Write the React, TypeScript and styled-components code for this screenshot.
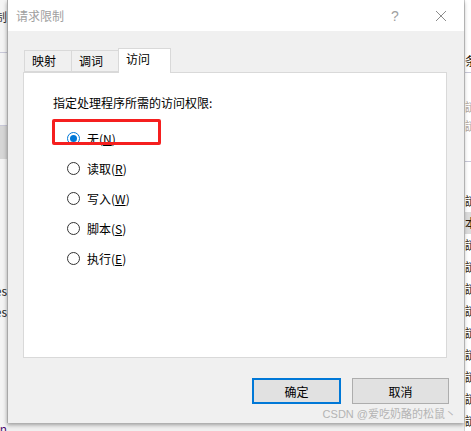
import React, { useState } from "react";
import styled, { createGlobalStyle } from "styled-components";

const GlobalStyle = createGlobalStyle`
    html, body {
        margin: 0;
        padding: 0;
        background: #f0f0f0;
    }
    body {
        font-family: "Noto Sans CJK SC", "Noto Sans", sans-serif;
        font-size: 12px;
        color: #000;
    }
`;

const Screen = styled.div`
    display: flex;
    width: 471px;
    height: 431px;
    overflow: hidden;
    background: #f0f0f0;
`;

const LeftStrip = styled.div`
    width: 7px;
    flex: none;
    display: flex;
    flex-direction: column;
    background: #f4f4f4;
    overflow: hidden;
    font-size: 12px;
`;

const StripPiece = styled.div<{ $h: number; $bg?: string; $line?: boolean; $color?: string }>`
    height: ${(p) => p.$h}px;
    flex: none;
    background: ${(p) => p.$bg || "transparent"};
    border-bottom: ${(p) => (p.$line ? "1px solid #c8c8d8" : "none")};
    color: ${(p) => p.$color || "#000"};
    line-height: ${(p) => p.$h}px;
    white-space: nowrap;
    display: flex;
    justify-content: flex-end;
`;

const RightStrip = styled.div`
    width: 7px;
    flex: none;
    display: flex;
    flex-direction: column;
    background: #fff;
    overflow: hidden;
    border-left: 1px solid #d0d0d0;
`;

const RightPiece = styled.div<{ $h: number; $color?: string; $bg?: string; $line?: boolean }>`
    height: ${(p) => p.$h}px;
    flex: none;
    color: ${(p) => p.$color || "#2a1a0a"};
    background: ${(p) => p.$bg || "transparent"};
    border-bottom: ${(p) => (p.$line ? "1px solid #c8c8d8" : "none")};
    line-height: ${(p) => p.$h}px;
    font-size: 12px;
    white-space: nowrap;
`;

const Dialog = styled.div`
    position: relative;
    width: 456px;
    height: 423px;
    flex: none;
    display: flex;
    flex-direction: column;
    border-left: 1px solid #a8a8a8;
    box-shadow: 0 2px 4px rgba(0, 0, 0, 0.35);
    background: #f0f0f0;
    z-index: 1;
`;

const TitleBar = styled.div`
    height: 31px;
    flex: none;
    display: flex;
    align-items: center;
    background: #fff;
    padding-left: 8px;
`;

const Title = styled.div`
    flex: 1;
    color: #a0a0a0;
    font-size: 12px;
`;

const TitleButton = styled.div`
    width: 46px;
    height: 31px;
    display: flex;
    align-items: center;
    justify-content: center;
    color: #a0a0a0;
    font-family: "Liberation Sans", sans-serif;
    font-size: 14px;
`;

const Body = styled.div`
    flex: 1;
    display: flex;
    flex-direction: column;
    padding: 17px 17px 0 15px;
`;

const TabRow = styled.div`
    display: flex;
    align-items: flex-end;
    height: 24px;
    padding-left: 2px;
    position: relative;
    z-index: 2;
`;

const Tab = styled.div<{ $active?: boolean; $w: number }>`
    width: ${(p) => p.$w}px;
    height: ${(p) => (p.$active ? 25 : 22)}px;
    margin-bottom: ${(p) => (p.$active ? -1 : 0)}px;
    margin-left: -1px;
    box-sizing: border-box;
    border: 1px solid #d9d9d9;
    border-bottom: ${(p) => (p.$active ? "none" : "1px solid #d9d9d9")};
    background: ${(p) => (p.$active ? "#fff" : "#f0f0f0")};
    padding: 2px 0 0 7px;
    font-size: 12px;
    line-height: 16px;
    color: #000;
`;

const Panel = styled.div`
    position: relative;
    height: 286px;
    box-sizing: border-box;
    background: #fff;
    border: 1px solid #d9d9d9;
    padding: 22px 0 0 29px;
    display: flex;
    flex-direction: column;
`;

const Prompt = styled.div`
    font-size: 12px;
    line-height: 16px;
    margin-bottom: 19px;
`;

const OptionList = styled.div`
    display: flex;
    flex-direction: column;
    gap: 14px;
    padding-left: 14px;
`;

const Option = styled.label`
    display: flex;
    align-items: center;
    gap: 7px;
    height: 16px;
    font-size: 12px;
    cursor: default;
`;

const RadioCircle = styled.span<{ $checked: boolean }>`
    width: 13px;
    height: 13px;
    box-sizing: border-box;
    border-radius: 50%;
    border: 1px solid ${(p) => (p.$checked ? "#0078d7" : "#333")};
    background: #fff;
    display: flex;
    align-items: center;
    justify-content: center;
    &::after {
        content: "";
        width: 7px;
        height: 7px;
        border-radius: 50%;
        background: ${(p) => (p.$checked ? "#0078d7" : "transparent")};
    }
`;

const Key = styled.span`
    text-decoration: underline;
    text-underline-offset: 1px;
`;

const Highlight = styled.div`
    position: absolute;
    left: 28px;
    top: 46px;
    width: 109px;
    height: 26px;
    box-sizing: border-box;
    border: 3px solid #f51f1f;
    border-radius: 2px;
    pointer-events: none;
`;

const ButtonRow = styled.div`
    display: flex;
    justify-content: flex-end;
    gap: 11px;
    margin-top: 20px;
    margin-right: -2px;
`;

const Button = styled.button<{ $primary?: boolean; $w: number }>`
    width: ${(p) => p.$w}px;
    height: 26px;
    box-sizing: border-box;
    background: #e1e1e1;
    border: ${(p) => (p.$primary ? "2px solid #0078d7" : "1px solid #adadad")};
    font-family: "Noto Sans CJK SC", sans-serif;
    font-size: 12px;
    color: #000;
    padding: 0;
`;

const Watermark = styled.div`
    position: absolute;
    right: 8px;
    bottom: 2px;
    font-family: "Liberation Sans", "Noto Sans CJK SC", sans-serif;
    font-size: 11px;
    color: #b4b4b4;
    white-space: nowrap;
`;

const options = [
    { label: "无", key: "N" },
    { label: "读取", key: "R" },
    { label: "写入", key: "W" },
    { label: "脚本", key: "S" },
    { label: "执行", key: "E" },
];

const rightRows = [
    { h: 50 },
    { h: 22, text: "条", line: true },
    { h: 25 },
    { h: 18, text: "謎", color: "#b0a8a0" },
    { h: 20, text: "謎", color: "#b0a8a0" },
    { h: 25, line: true },
    { h: 28 },
    { h: 22, text: "謎" },
    { h: 22, text: "本", bg: "#dcdcdc" },
    ...Array.from({ length: 10 }, () => ({ h: 22, text: "謎" })),
];

const App = () => {
    const [selected, setSelected] = useState("N");

    return (
        <Screen>
            <GlobalStyle />
            <LeftStrip>
                <StripPiece $h={10} />
                <StripPiece $h={14} $color="#333">
                    制
                </StripPiece>
                <StripPiece $h={28} $line />
                <StripPiece $h={72} $line />
                <StripPiece $h={33} $bg="#d6d6d6" />
                <StripPiece $h={122} />
                <StripPiece $h={20} $color="#222">
                    es
                </StripPiece>
                <StripPiece $h={22} $color="#222">
                    es
                </StripPiece>
                <StripPiece $h={98} />
                <StripPiece $h={16} $color="#501070">
                    n
                </StripPiece>
            </LeftStrip>
            <Dialog>
                <TitleBar>
                    <Title>请求限制</Title>
                    <TitleButton>?</TitleButton>
                    <TitleButton>
                        <svg width="12" height="12" viewBox="0 0 12 12">
                            <path d="M1 1L11 11M11 1L1 11" stroke="#8c8c8c" strokeWidth="1" />
                        </svg>
                    </TitleButton>
                </TitleBar>
                <Body>
                    <TabRow>
                        <Tab $w={48}>映射</Tab>
                        <Tab $w={48}>调词</Tab>
                        <Tab $w={53} $active>
                            访问
                        </Tab>
                    </TabRow>
                    <Panel>
                        <Prompt>指定处理程序所需的访问权限:</Prompt>
                        <OptionList>
                            {options.map((o) => (
                                <Option key={o.key} onClick={() => setSelected(o.key)}>
                                    <RadioCircle $checked={selected === o.key} />
                                    <span>
                                        {o.label}(<Key>{o.key}</Key>)
                                    </span>
                                </Option>
                            ))}
                        </OptionList>
                        <Highlight />
                    </Panel>
                    <ButtonRow>
                        <Button $primary $w={89}>
                            确定
                        </Button>
                        <Button $w={97}>取消</Button>
                    </ButtonRow>
                </Body>
                <Watermark>CSDN @爱吃奶酪的松鼠丶</Watermark>
            </Dialog>
            <RightStrip>
                {rightRows.map((r, i) => (
                    <RightPiece key={i} $h={r.h} $color={r.color} $bg={r.bg} $line={r.line}>
                        {r.text}
                    </RightPiece>
                ))}
            </RightStrip>
        </Screen>
    );
};

export default App;
